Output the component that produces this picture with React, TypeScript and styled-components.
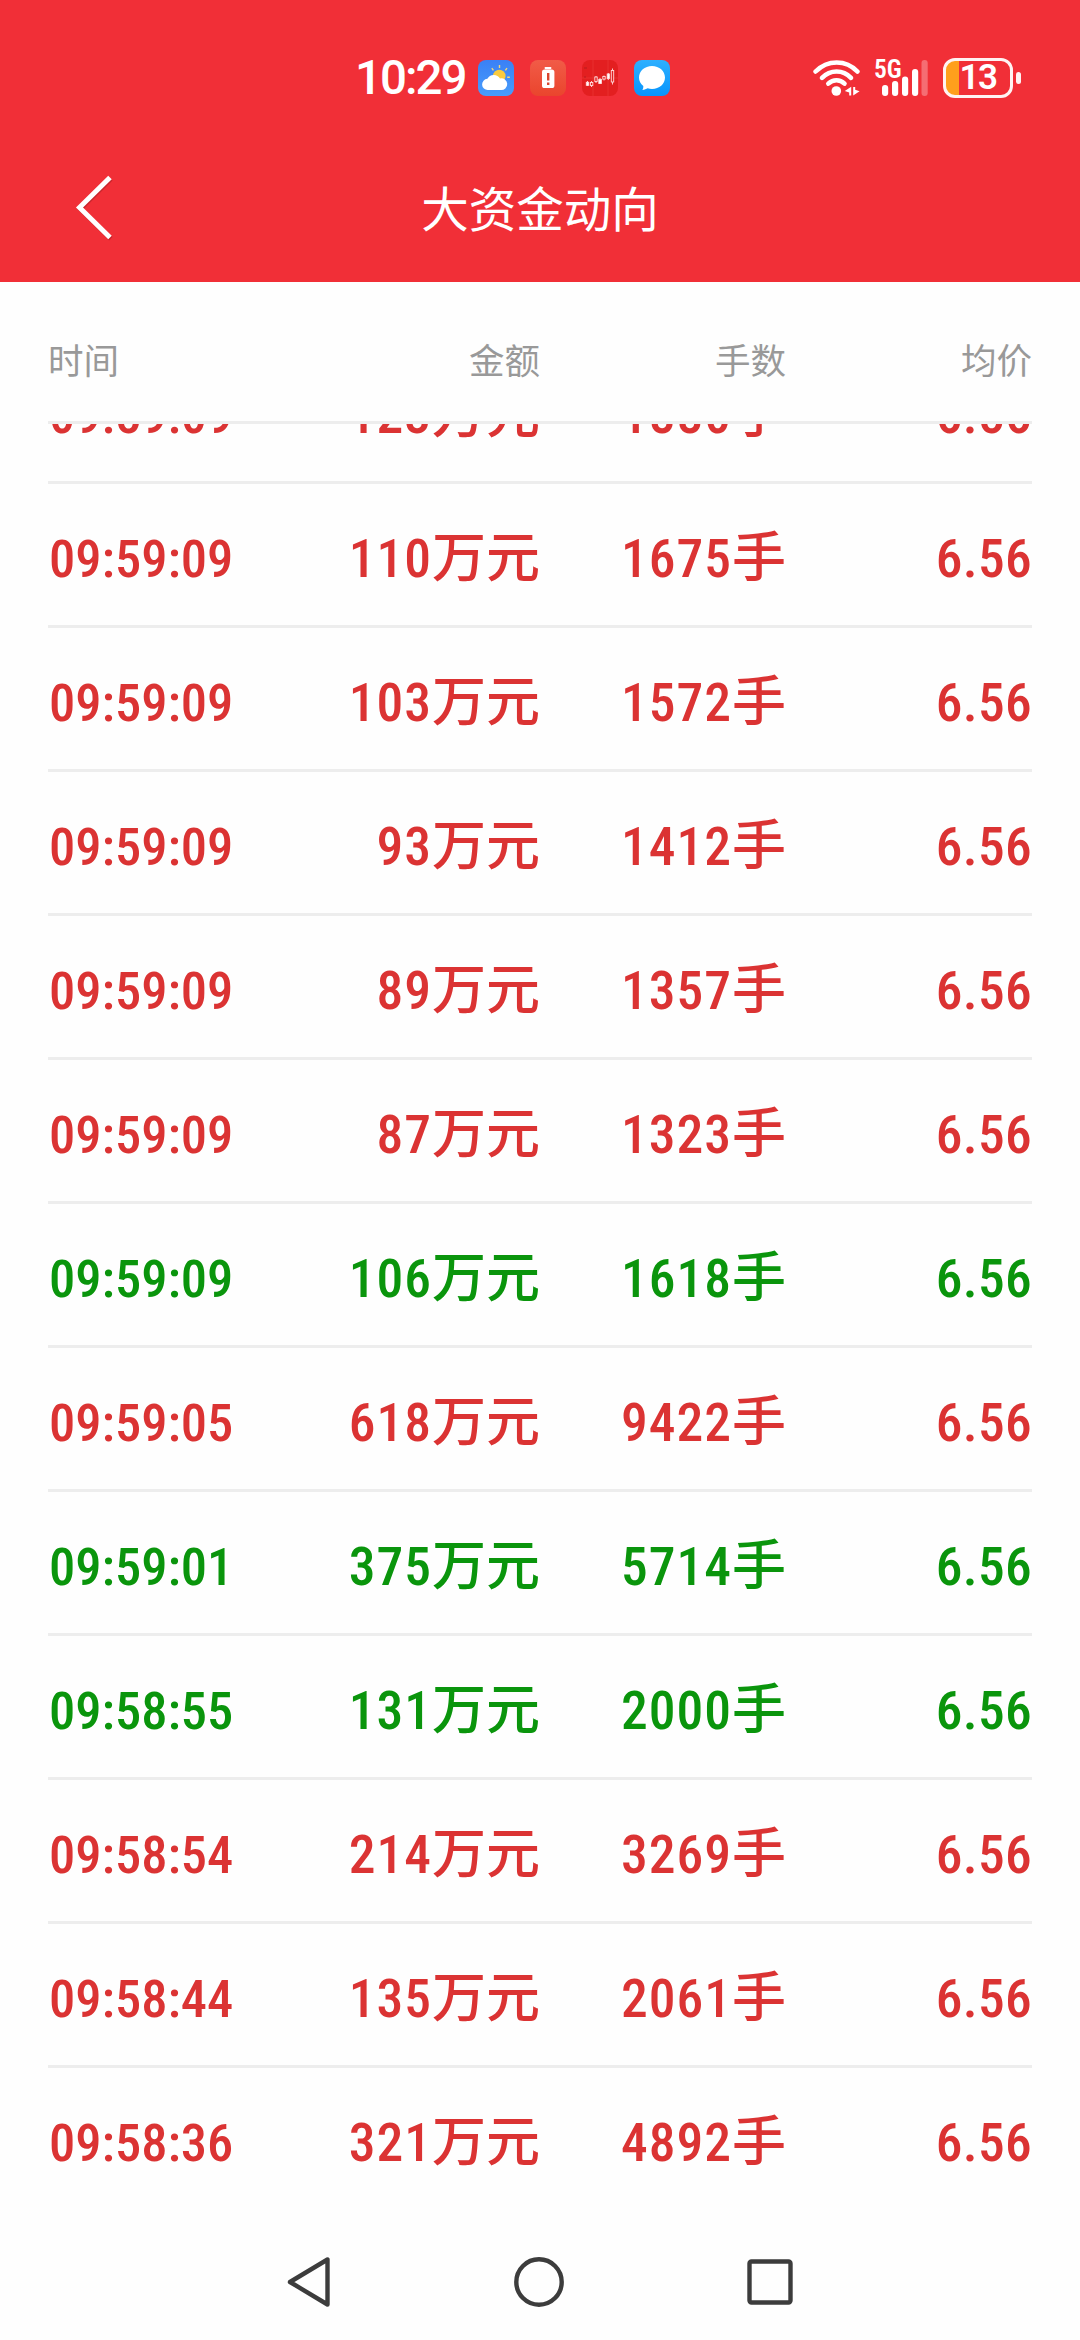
import React from 'react';
import styled, { createGlobalStyle } from 'styled-components';

type Side = 'buy' | 'sell';

interface Deal {
  time: string;
  amount: number;
  lots: number;
  price: string;
  side: Side;
}

const SIDE_COLORS: Record<Side, string> = {
  buy: '#db3333',
  sell: '#0a950c',
};

const COLUMNS = ['时间', '金额', '手数', '均价'];

const DEALS: Deal[] = [
  { time: '09:59:09', amount: 123, lots: 1880, price: '6.56', side: 'buy' },
  { time: '09:59:09', amount: 110, lots: 1675, price: '6.56', side: 'buy' },
  { time: '09:59:09', amount: 103, lots: 1572, price: '6.56', side: 'buy' },
  { time: '09:59:09', amount: 93, lots: 1412, price: '6.56', side: 'buy' },
  { time: '09:59:09', amount: 89, lots: 1357, price: '6.56', side: 'buy' },
  { time: '09:59:09', amount: 87, lots: 1323, price: '6.56', side: 'buy' },
  { time: '09:59:09', amount: 106, lots: 1618, price: '6.56', side: 'sell' },
  { time: '09:59:05', amount: 618, lots: 9422, price: '6.56', side: 'buy' },
  { time: '09:59:01', amount: 375, lots: 5714, price: '6.56', side: 'sell' },
  { time: '09:58:55', amount: 131, lots: 2000, price: '6.56', side: 'sell' },
  { time: '09:58:54', amount: 214, lots: 3269, price: '6.56', side: 'buy' },
  { time: '09:58:44', amount: 135, lots: 2061, price: '6.56', side: 'buy' },
  { time: '09:58:36', amount: 321, lots: 4892, price: '6.56', side: 'buy' },
];

const GlobalStyle = createGlobalStyle`
  * {
    box-sizing: border-box;
  }

  body {
    margin: 0;
    background: #fefefe;
    font-family: Roboto, 'Noto Sans CJK SC', sans-serif;
  }

  svg {
    display: block;
    flex: none;
  }
`;

const Screen = styled.div`
  display: flex;
  flex-direction: column;
  width: 1080px;
  height: 2340px;
  overflow: hidden;
`;

const Header = styled.header`
  height: 282px;
  background: #f12f37;
  color: #fff;
`;

const StatusBar = styled.div`
  display: flex;
  align-items: center;
  height: 156px;
  padding: 0 59px 0 355px;
`;

const Clock = styled.span`
  width: 123px;
  font-size: 47.5px;
  font-weight: 500;
  line-height: 56px;
  letter-spacing: -2px;
`;

const AppIcons = styled.div`
  display: flex;
  gap: 16px;
`;

const StatusIcons = styled.div`
  display: flex;
  align-items: center;
  gap: 14px;
  margin-left: auto;
`;

const Signal = styled.div`
  display: flex;
  align-items: flex-start;
  width: 55px;
  height: 36px;
`;

const SignalLabel = styled.span`
  width: 25px;
  margin-right: -18px;
  font-size: 25.5px;
  font-stretch: 75%;
  font-weight: 600;
  line-height: 18px;
`;

const Battery = styled.div`
  display: flex;
  align-items: center;
  gap: 3px;
`;

const BatteryBody = styled.div`
  display: flex;
  align-items: center;
  justify-content: center;
  width: 70px;
  height: 40px;
  border: 3px solid #fff3f3;
  border-radius: 12px;
  background: linear-gradient(to right, #ff9f1c 13px, transparent 13px);
  font-size: 35px;
  font-weight: 600;
  line-height: 34px;
  letter-spacing: -1.5px;
`;

const BatteryTip = styled.div`
  width: 5px;
  height: 12px;
  border-radius: 2.5px;
  background: #fff3f3;
`;

const TitleBar = styled.div`
  display: grid;
  grid-template-columns: 200px 1fr 200px;
  align-items: center;
  height: 104px;
`;

const BackButton = styled.button`
  width: 120px;
  padding: 0 0 0 74px;
  border: none;
  background: none;
  color: inherit;
`;

const Title = styled.h1`
  margin: 0;
  padding-bottom: 3px;
  font-family: 'Noto Sans CJK SC', sans-serif;
  font-size: 47.5px;
  font-weight: 400;
  line-height: 60px;
  text-align: center;
`;

const TableHead = styled.div`
  display: grid;
  grid-template-columns: repeat(4, 1fr);
  flex: none;
  height: 142px;
  margin: 0 48px;
  padding-top: 53px;
  border-bottom: 3px solid #ededed;
`;

const HeadCell = styled.span`
  font-family: 'Noto Sans CJK SC', sans-serif;
  font-size: 35.5px;
  line-height: 48px;
  color: #999;
  text-align: right;

  &:first-child {
    text-align: left;
  }
`;

// スクロール途中の位置なので、先頭行は上側が切れる
const DealList = styled.div`
  display: flex;
  flex-direction: column;
  justify-content: flex-end;
  flex: none;
  height: 1788px;
  margin: 0 48px;
  overflow: hidden;
`;

const DealRow = styled.div<{ $side: Side }>`
  display: grid;
  grid-template-columns: repeat(4, 1fr);
  align-items: baseline;
  align-content: start;
  flex: none;
  height: 144px;
  padding-top: 40px;
  border-bottom: 3px solid #ededed;
  color: ${props => SIDE_COLORS[props.$side]};

  &:last-child {
    border-bottom-color: transparent;
  }
`;

const Figure = styled.span`
  font-size: 53.5px;
  font-stretch: 75%;
  font-weight: 500;
  line-height: 60px;
  letter-spacing: 1px;
  text-align: right;
  white-space: nowrap;
`;

const Time = styled(Figure)`
  padding-left: 1px;
  font-size: 52.5px;
  letter-spacing: 0;
  text-align: left;
`;

const Price = styled(Figure)`
  letter-spacing: 0.3px;
`;

const Unit = styled.span`
  font-family: 'Noto Sans CJK SC', sans-serif;
  font-size: 54px;
  letter-spacing: 0;
`;

const NavBar = styled.nav`
  display: flex;
  justify-content: space-between;
  flex: none;
  height: 128px;
  padding: 44px 287px 0;
  color: #3c3c3c;
`;

const WeatherIcon = () => (
  <svg width="36" height="36" viewBox="0 0 36 36">
    <defs>
      <linearGradient id="sky" x1="0" y1="0" x2="0" y2="1">
        <stop offset="0" stopColor="#3a80f5" />
        <stop offset="1" stopColor="#489dfc" />
      </linearGradient>
    </defs>
    <rect width="36" height="36" rx="8" fill="url(#sky)" />
    <circle cx="21.3" cy="16" r="6.3" fill="#fbcb3d" />
    <path
      d="M21.5 5v3M13.8 8.2l1.6 2.2M29 8.2l-1.6 2.2M31.8 17.2h-2.6"
      stroke="#f3d77a"
      strokeWidth="1.4"
    />
    <path
      d="M10 30a5.6 5.6 0 0 1-.6-11.2A7.2 7.2 0 0 1 22 18.4a5.9 5.9 0 1 1 .6 11.6z"
      fill="#fff"
    />
  </svg>
);

const PowerIcon = () => (
  <svg width="36" height="36" viewBox="0 0 36 36">
    <defs>
      <linearGradient id="power" x1="0" y1="0" x2="0" y2="1">
        <stop offset="0" stopColor="#f15b47" />
        <stop offset="1" stopColor="#ea452d" />
      </linearGradient>
    </defs>
    <rect width="36" height="36" rx="8" fill="url(#power)" />
    <rect x="14.7" y="7" width="6.6" height="2.2" rx=".6" fill="#fff" />
    <rect x="12" y="9.4" width="12.4" height="18.6" rx="2.6" fill="#fff" />
    <path d="M18.2 13v7.4M18.2 22.4v2.6" stroke="#d9452f" strokeWidth="2.4" />
  </svg>
);

const StockIcon = () => (
  <svg width="36" height="36" viewBox="0 0 36 36">
    <rect width="36" height="36" rx="8" fill="#e31f20" />
    <path d="M11 0v36M26 0v36M0 18h36" stroke="#ea3838" strokeWidth=".7" />
    <path d="M2 8h3M2 17h2" stroke="#b91c1c" />
    <g stroke="#ffdcdc" strokeWidth=".9" fill="#e31f20">
      <path d="M5.5 21v5M9.5 21v6M14 16v7M18 18v6M22 15.5v5M26.3 13v7M30.5 8.5v16" />
      <rect x="4.3" y="22.3" width="2.5" height="3" fill="#fff" />
      <rect x="8.5" y="22.5" width="2.3" height="3" />
      <rect x="12.8" y="17" width="2.4" height="4.5" />
      <rect x="16.8" y="19.5" width="2.6" height="4" fill="#fff" />
      <rect x="20.8" y="16.5" width="2.4" height="2.6" />
      <rect x="25.2" y="14" width="2.2" height="4.5" fill="#fff" />
      <rect x="29.3" y="10.5" width="2.4" height="11.5" />
    </g>
  </svg>
);

const MessageIcon = () => (
  <svg width="36" height="36" viewBox="0 0 36 36">
    <defs>
      <linearGradient id="message" x1="0" y1="0" x2="0" y2="1">
        <stop offset="0" stopColor="#2eb0ff" />
        <stop offset="1" stopColor="#0794fc" />
      </linearGradient>
    </defs>
    <rect width="36" height="36" rx="8" fill="url(#message)" />
    <path
      d="M18 6c7.3 0 13 5 13 11.5S25.3 29 18 29c-1.5 0-3-.2-4.400-.7-1.3.9-3 1.5-5.2 1.6.7-1 1-2.4.9-3.9C6.600 24 5 21 5 17.500 5 11 10.700 6 18 6z"
      fill="#fff"
    />
  </svg>
);

const WifiIcon = () => (
  <svg width="47" height="36" viewBox="0 0 47 36" fill="none">
    <g stroke="#fff" strokeWidth="4.6" strokeLinecap="round">
      <path d="M2.6 11.5C14.500-.6 33-.6 44.400 11.500" />
      <path d="M9 17.8c8.3-8.4 21-8.4 29 0" />
      <path d="M15.3 23.6c4.8-4.4 11.6-4.4 16.2 0" />
    </g>
    <circle cx="23.3" cy="31" r="4.8" fill="#fff" />
    <path d="M38.2 26.8v8.6h-2v-2.8L31.800 31zM40.2 35.6V27h2v2.8l4.4 1.4z" fill="#fff" />
  </svg>
);

const SignalBars = () => (
  <svg width="48" height="36" viewBox="0 0 48 36" fill="#fff">
    <rect x="1" y="25" width="6.2" height="11" rx="3" />
    <rect x="11" y="21" width="6.2" height="15" rx="3" />
    <rect x="21" y="16.5" width="6.2" height="19.5" rx="3" />
    <rect x="31" y="9" width="6.2" height="27" rx="3" />
    <rect x="40.5" y="0" width="6.2" height="36" rx="3" opacity=".3" />
  </svg>
);

const BackChevron = () => (
  <svg width="40" height="68" viewBox="0 0 40 68" fill="none">
    <path d="M36.8 4.8L6.3 34.8l30.5 30" stroke="#c9252c" strokeWidth="5" />
    <path d="M36 3.5l-30.5 30 30.500 30" stroke="#fff" strokeWidth="5" />
  </svg>
);

export default function App() {
  return (
    <Screen>
      <GlobalStyle />
      <Header>
        <StatusBar>
          <Clock>10:29</Clock>
          <AppIcons>
            <WeatherIcon />
            <PowerIcon />
            <StockIcon />
            <MessageIcon />
          </AppIcons>
          <StatusIcons>
            <WifiIcon />
            <Signal>
              <SignalLabel>5G</SignalLabel>
              <SignalBars />
            </Signal>
            <Battery>
              <BatteryBody>13</BatteryBody>
              <BatteryTip />
            </Battery>
          </StatusIcons>
        </StatusBar>
        <TitleBar>
          <BackButton aria-label="返回">
            <BackChevron />
          </BackButton>
          <Title>大资金动向</Title>
        </TitleBar>
      </Header>

      <TableHead>
        {COLUMNS.map(label => (
          <HeadCell key={label}>{label}</HeadCell>
        ))}
      </TableHead>

      <DealList>
        {DEALS.map((deal, i) => (
          <DealRow key={`${deal.time}-${i}`} $side={deal.side}>
            <Time>{deal.time}</Time>
            <Figure>
              {deal.amount}
              <Unit>万元</Unit>
            </Figure>
            <Figure>
              {deal.lots}
              <Unit>手</Unit>
            </Figure>
            <Price>{deal.price}</Price>
          </DealRow>
        ))}
      </DealList>

      <NavBar>
        <svg width="44" height="52" viewBox="0 0 44 52" fill="none" stroke="currentColor">
          <path d="M40.5 3.5v45L3 26z" strokeWidth="4.4" strokeLinejoin="round" />
        </svg>
        <svg width="50" height="52" viewBox="0 0 50 52" fill="none" stroke="currentColor">
          <circle cx="25" cy="26" r="22.7" strokeWidth="4.4" />
        </svg>
        <svg width="46" height="52" viewBox="0 0 46 52" fill="none" stroke="currentColor">
          <rect x="2.5" y="5.5" width="41" height="41" rx="2" strokeWidth="4.4" />
        </svg>
      </NavBar>
    </Screen>
  );
}
